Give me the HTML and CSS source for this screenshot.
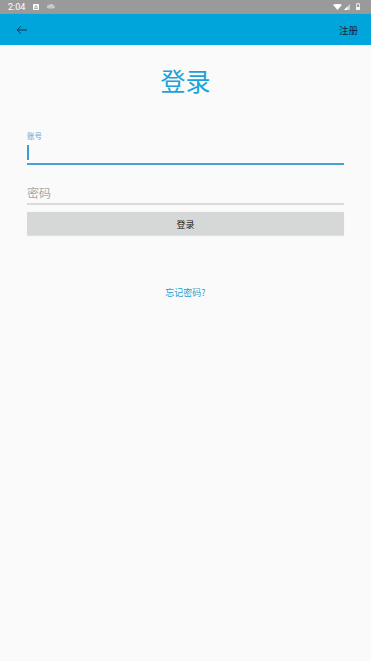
FILE: index.html
```html
<!DOCTYPE html>
<html lang="zh">
<head>
<meta charset="utf-8">
<title>登录</title>
<link rel="stylesheet" href="styles.css">
</head>
<body>
<div class="statusbar">
  <div class="sb-left">
    <span class="time">2:04</span>
    <svg class="sb-icon box" width="6" height="6" viewBox="0 0 6 6"><rect width="6" height="6" rx="0.8" fill="#fff"/><path d="M3 1.3 L4.6 4.6 L1.4 4.6 Z" fill="none" stroke="#888" stroke-width="0.7"/></svg>
    <svg class="sb-icon cloud" width="9" height="5" viewBox="0 0 9 5"><path d="M2 4.5 h5.5 a1.5 1.5 0 0 0 0-3 a2.3 2.3 0 0 0-4.3-0.4 a1.7 1.7 0 0 0-1.2 3.4z" fill="#c9c9c9"/></svg>
  </div>
  <div class="sb-right">
    <svg class="sb-icon" width="9" height="6" viewBox="0 0 9 6"><path d="M0 0.8 Q4.5 -1 9 0.8 L4.5 6 Z" fill="#fff"/></svg>
    <svg class="sb-icon" width="6" height="6" viewBox="0 0 6 6"><path d="M6 0 L6 6 L0 6 Z" fill="#cfcfcf"/><path d="M3.5 2.5 L3.5 6 L0 6 Z" fill="#fff"/></svg>
    <svg class="sb-icon batt" width="4" height="7" viewBox="0 0 4 7"><rect x="1.2" y="0" width="1.6" height="0.8" fill="#fff"/><rect x="0.35" y="0.95" width="3.3" height="5.7" fill="none" stroke="#fff" stroke-width="0.7"/><rect x="0.7" y="4" width="2.6" height="2.3" fill="#fff"/></svg>
  </div>
</div>
<header class="appbar">
  <svg class="back" width="12" height="10" viewBox="0 0 12 10"><path d="M11 5 H1.2 M5 1.2 L1.2 5 L5 8.8" fill="none" stroke="#16334a" stroke-width="1"/></svg>
  <span class="register">注册</span>
</header>
<main class="content">
  <h1 class="title">登录</h1>
  <div class="field field-active">
    <label class="field-label">账号</label>
    <div class="field-input"><span class="caret"></span></div>
  </div>
  <div class="field field-plain">
    <span class="placeholder">密码</span>
  </div>
  <button class="login-btn">登录</button>
  <div class="forgot">忘记密码?</div>
</main>
</body>
</html>
```

FILE: styles.css
```css
* { box-sizing: border-box; }
html, body {
  margin: 0;
  padding: 0;
  background: #fafafa;
  font-family: "Noto Sans CJK SC", "Noto Sans", Roboto, sans-serif;
}
.statusbar {
  height: 14px;
  background: #9a9a9a;
  display: flex;
  justify-content: space-between;
  align-items: center;
  padding: 0 11px 0 8px;
  border-bottom: 1px solid #8f9a9e;
}
.sb-left, .sb-right {
  display: flex;
  align-items: center;
}
.time {
  color: #fff;
  font-family: Roboto, "Noto Sans", sans-serif;
  font-size: 9px;
  line-height: 10px;
  margin-right: 8px;
}
.sb-icon { display: block; }
.box { margin-right: 7px; }
.sb-right .sb-icon { margin-left: 2px; }
.sb-right .batt { margin-left: 6px; }
.appbar {
  height: 31px;
  background: #00a5dc;
  display: flex;
  justify-content: space-between;
  align-items: center;
  padding: 0 13px 0 16px;
}
.back { display: block; }
.register {
  font-size: 9.5px;
  color: #17242e;
  line-height: 12px;
}
.content {
  padding: 0 27px;
  display: flex;
  flex-direction: column;
}
.title {
  margin: 20px 0 0;
  height: 30px;
  line-height: 30px;
  font-size: 25px;
  font-weight: 400;
  color: #1ba2d8;
  text-align: center;
}
.field-active {
  margin-top: 36px;
  border-bottom: 2px solid #45a0d4;
}
.field-label {
  display: block;
  font-size: 7.5px;
  line-height: 10px;
  color: #5aa6d6;
}
.field-input {
  height: 22px;
  padding-top: 4px;
}
.caret {
  display: block;
  width: 1.5px;
  height: 15px;
  background: #3f9bd0;
}
.field-plain {
  padding-top: 19px;
  padding-bottom: 2px;
  border-bottom: 2px solid #dadada;
}
.placeholder {
  display: block;
  font-size: 12px;
  line-height: 17px;
  color: #a8a8a8;
}
.login-btn {
  margin-top: 7px;
  height: 23px;
  border: none;
  border-radius: 1px;
  background: #d6d7d7;
  font-family: "Noto Sans CJK SC", sans-serif;
  font-size: 9px;
  color: #222;
  padding: 2px 0 0;
  box-shadow: 0 0.5px 1px rgba(0,0,0,0.12);
}
.forgot {
  margin-top: 52px;
  text-align: center;
  font-size: 9px;
  line-height: 12px;
  color: #1f9fd3;
}
```
